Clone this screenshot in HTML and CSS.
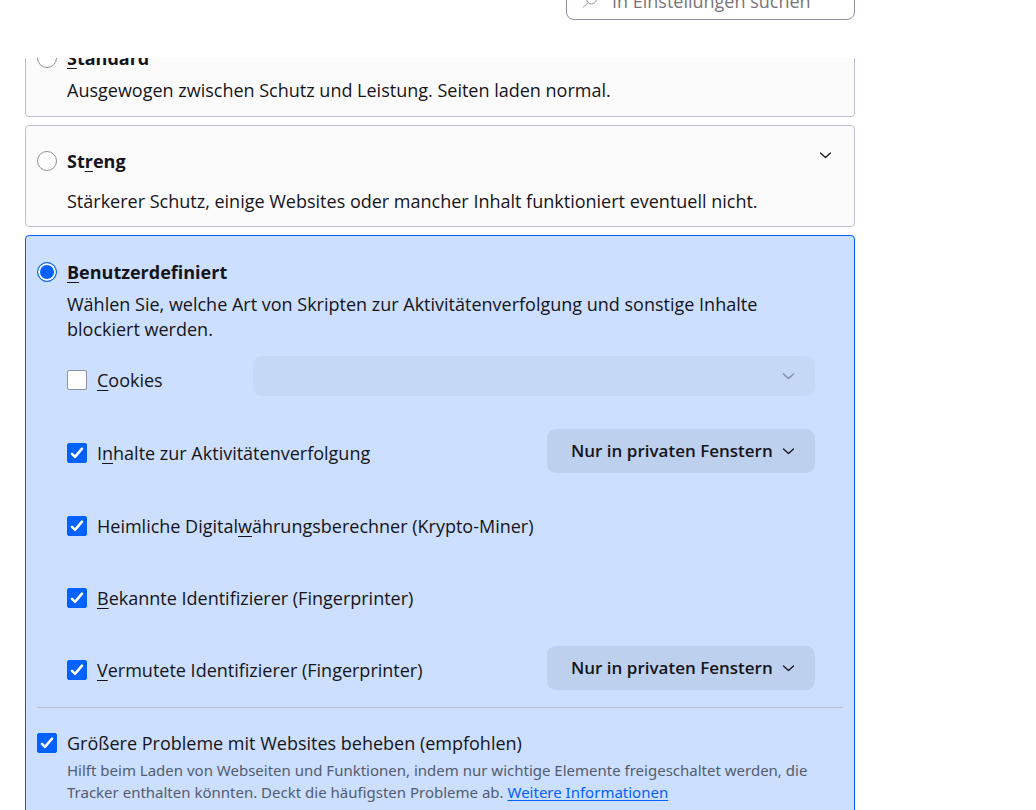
FILE: index.html
```html
<!DOCTYPE html>
<html lang="de">
<head>
<meta charset="utf-8">
<title>Einstellungen</title>
<link rel="stylesheet" href="styles.css">
</head>
<body>
<header class="toolbar">
  <label class="search">
    <svg class="search-icon" viewBox="0 0 16 16" aria-hidden="true"><circle cx="9.5" cy="6" r="5"/><path d="M6 9.5 1 14.5"/></svg>
    <input class="search-input" type="search" placeholder="In Einstellungen suchen" aria-label="In Einstellungen suchen">
  </label>
</header>
<main class="pane">
  <section class="card card-scrolled">
    <label class="choice"><input class="radio" type="radio" name="level"><span><u>S</u>tandard</span></label>
    <p class="text">Ausgewogen zwischen Schutz und Leistung. Seiten laden normal.</p>
  </section>
  <section class="card card-strict">
    <div class="head">
      <label class="choice"><input class="radio" type="radio" name="level"><span>St<u>r</u>eng</span></label>
      <button class="expander" type="button" aria-label="Mehr anzeigen"><svg class="chevron" viewBox="0 0 12 12"><path d="M1.5 4 6.5 8.5 11.5 4"/></svg></button>
    </div>
    <p class="text">Stärkerer Schutz, einige Websites oder mancher Inhalt funktioniert eventuell nicht.</p>
  </section>
  <section class="card card-selected">
    <label class="choice"><input class="radio" type="radio" name="level" checked><span><u>B</u>enutzerdefiniert</span></label>
    <p class="text">Wählen Sie, welche Art von Skripten zur Aktivitätenverfolgung und sonstige Inhalte blockiert werden.</p>
    <div class="options">
      <div class="option option-menu">
        <label class="check check-cookies"><input class="box" type="checkbox"><span><u>C</u>ookies</span></label>
        <select class="menu menu-wide" aria-label="Cookies" disabled><option></option></select>
      </div>
      <div class="option option-menu">
        <label class="check"><input class="box" type="checkbox" checked><span>I<u>n</u>halte zur Aktivitätenverfolgung</span></label>
        <select class="menu" aria-label="Inhalte zur Aktivitätenverfolgung"><option>Nur in privaten Fenstern</option></select>
      </div>
      <div class="option">
        <label class="check"><input class="box" type="checkbox" checked><span>Heimliche Digital<u>w</u>ährungsberechner (Krypto-Miner)</span></label>
      </div>
      <div class="option">
        <label class="check"><input class="box" type="checkbox" checked><span><u>B</u>ekannte Identifizierer (Fingerprinter)</span></label>
      </div>
      <div class="option option-menu">
        <label class="check"><input class="box" type="checkbox" checked><span><u>V</u>ermutete Identifizierer (Fingerprinter)</span></label>
        <select class="menu" aria-label="Vermutete Identifizierer"><option>Nur in privaten Fenstern</option></select>
      </div>
    </div>
    <div class="compat">
      <label class="check"><input class="box" type="checkbox" checked><span>Größere Probleme mit Websites beheben (empfohlen)</span></label>
      <p class="hint">Hilft beim Laden von Webseiten und Funktionen, indem nur wichtige Elemente freigeschaltet werden, die Tracker enthalten könnten. Deckt die häufigsten Probleme ab. <a class="link" href="#">Weitere Informationen</a></p>
    </div>
  </section>
</main>
</body>
</html>
```
FILE: styles.css
```css
* { box-sizing: border-box; }

body {
  margin: 0;
  height: 100vh;
  overflow: hidden;
  display: flex;
  flex-direction: column;
  background: #fff;
  color: #15141a;
  font: 18px/24px "Segoe UI", "Open Sans", "Noto Sans", sans-serif;
}

u { text-underline-offset: 3px; text-decoration-thickness: 1px; }

.toolbar {
  flex: none;
  display: flex;
  justify-content: flex-end;
  align-items: flex-end;
  height: 58px;
  max-width: 855px;
  padding-bottom: 38px;
}

.search {
  flex: none;
  display: flex;
  align-items: center;
  gap: 14px;
  width: 289px;
  height: 38px;
  padding: 0 15px;
  border: 1px solid #8f8f9d;
  border-radius: 8px;
}

.search-icon { flex: none; width: 16px; height: 16px; fill: none; stroke: #8f8f9d; }

.search-input {
  flex: 1;
  min-width: 0;
  padding: 0;
  border: 0;
  outline: 0;
  background: none;
  font: inherit;
}

.search-input::placeholder { color: #77767c; opacity: 1; }

.pane {
  flex: 1;
  min-height: 0;
  overflow: hidden;
  display: flex;
  flex-direction: column;
  gap: 8px;
  max-width: 855px;
  padding-left: 25px;
}

.card {
  flex: none;
  padding: 24px 11px 13px;
  border: 1px solid #bfbfcd;
  border-radius: 4px;
  background: #fbfbfb;
}

.card-scrolled { margin-top: -37px; }
.card-strict { padding-top: 23px; padding-bottom: 12px; }
.card-strict .text { margin-top: 16px; }

.card-selected { border-color: #0061ff; background: #ccdfff; }

.head { display: flex; justify-content: space-between; }

.choice { display: flex; align-items: center; gap: 10px; font-weight: 700; }

.radio {
  appearance: none;
  flex: none;
  width: 20px;
  height: 20px;
  margin: 0;
  border: 1px solid #8f8f9d;
  border-radius: 50%;
  background: #fff;
}

.radio:checked { border-color: #0061ff; background: #0061ff; box-shadow: inset 0 0 0 2px #fff; }

.expander {
  display: flex;
  align-items: flex-start;
  margin-right: 12px;
  padding: 0;
  border: 0;
  background: none;
}

.chevron { width: 12px; height: 12px; fill: none; stroke: #15141a; stroke-width: 1.3; stroke-linecap: round; stroke-linejoin: round; }

.text { margin: 8px 0 0 30px; padding-right: 48px; line-height: 25px; }

.options { display: flex; flex-direction: column; gap: 25px; margin: 14px 28px 13px 30px; }

.option { display: flex; justify-content: space-between; min-height: 47px; }
.option-menu { min-height: 48px; }

.check { display: flex; align-items: center; gap: 10px; }
.check-cookies { width: 186px; }

.box {
  appearance: none;
  flex: none;
  width: 20px;
  height: 20px;
  margin: 0;
  border: 1px solid #8f8f9d;
  border-radius: 2px;
  background: #fff;
}

.box:checked {
  border-color: #0061ff;
  background: #0061ff url("data:image/svg+xml,%3Csvg xmlns='http://www.w3.org/2000/svg' viewBox='0 0 18 18'%3E%3Cpath d='M4 9.8 7 12.8 14 4.7' fill='none' stroke='%23fff' stroke-width='2.6' stroke-linecap='round' stroke-linejoin='round'/%3E%3C/svg%3E") center / 18px 18px no-repeat;
}

.menu {
  appearance: none;
  width: 268px;
  height: 44px;
  padding: 0 24px;
  border: 0;
  border-radius: 9px;
  background: #bdd0ee url("data:image/svg+xml,%3Csvg xmlns='http://www.w3.org/2000/svg' viewBox='0 0 12 12'%3E%3Cpath d='M1.5 4 6.5 8.5 11.5 4' fill='none' stroke='%2315141a' stroke-width='1.3' stroke-linecap='round' stroke-linejoin='round'/%3E%3C/svg%3E") right 21px center / 12px 12px no-repeat;
  color: #15141a;
  font: inherit;
  font-size: 17px;
  font-weight: 600;
  opacity: 1;
}

.menu-wide {
  flex: 1;
  height: 40px;
  background-color: #c5d8f6;
  background-image: url("data:image/svg+xml,%3Csvg xmlns='http://www.w3.org/2000/svg' viewBox='0 0 12 12'%3E%3Cpath d='M1.5 4 6.5 8.5 11.5 4' fill='none' stroke='%237e8ca5' stroke-width='1.3' stroke-linecap='round' stroke-linejoin='round'/%3E%3C/svg%3E");
}

.compat { padding-top: 23px; border-top: 1px solid #b9bfd0; }

.hint {
  margin: 4px 0 0 30px;
  color: #535c6e;
  font-family: "Segoe UI", "Noto Sans", sans-serif;
  font-size: 15px;
  line-height: 22px;
}

.link { color: #0061ff; text-underline-offset: 2px; }
```
